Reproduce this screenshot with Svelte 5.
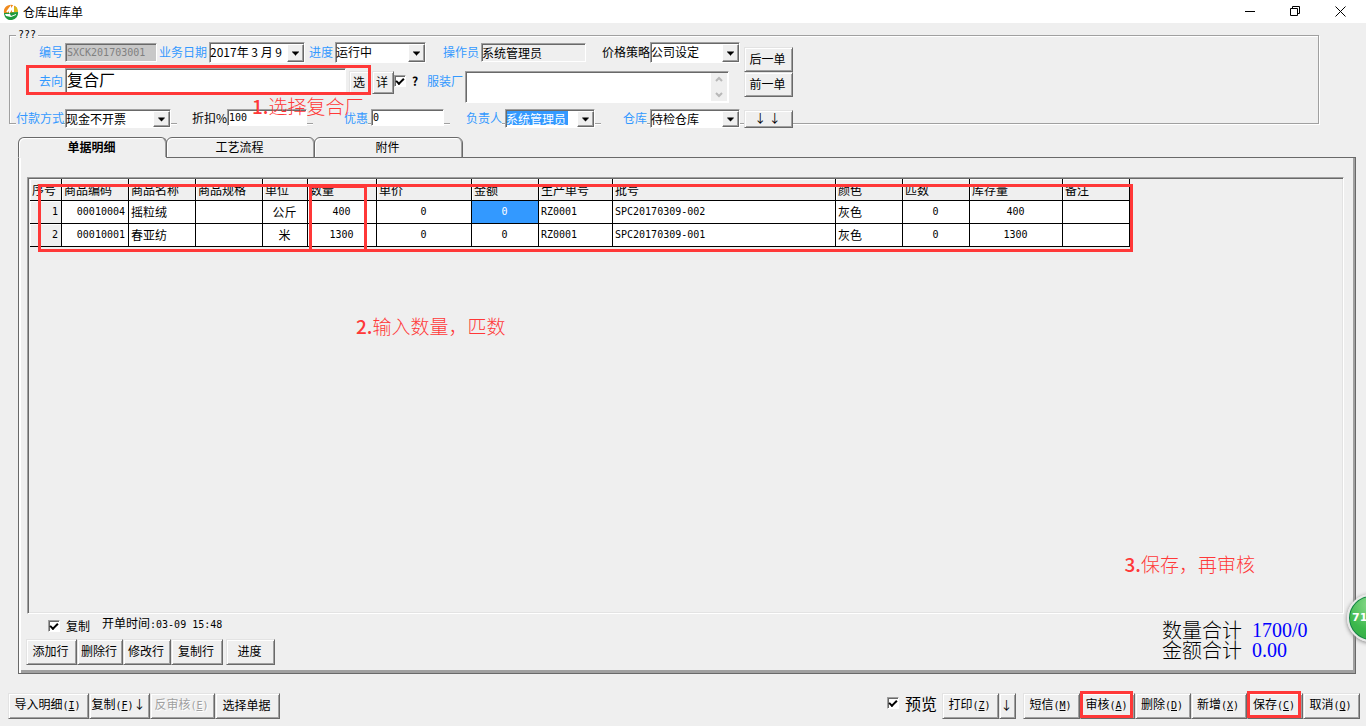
<script lang="ts">
  interface Column {
    title: string;
    width: number;
    align: 'left' | 'center' | 'right';
  }

  const columns: Column[] = [
    { title: '序号', width: 32, align: 'right' },
    { title: '商品编码', width: 67, align: 'right' },
    { title: '商品名称', width: 67, align: 'left' },
    { title: '商品规格', width: 67, align: 'left' },
    { title: '单位', width: 45, align: 'center' },
    { title: '数量', width: 69, align: 'center' },
    { title: '单价', width: 95, align: 'center' },
    { title: '金额', width: 67, align: 'center' },
    { title: '生产单号', width: 74, align: 'left' },
    { title: '批号', width: 223, align: 'left' },
    { title: '颜色', width: 67, align: 'left' },
    { title: '匹数', width: 67, align: 'center' },
    { title: '库存量', width: 93, align: 'center' },
    { title: '备注', width: 67, align: 'left' }
  ];

  const rows = [
    ['1', '00010004', '摇粒绒', '', '公斤', '400', '0', '0', 'RZ0001', 'SPC20170309-002', '灰色', '0', '400', ''],
    ['2', '00010001', '春亚纺', '', '米', '1300', '0', '0', 'RZ0001', 'SPC20170309-001', '灰色', '0', '1300', '']
  ];

  const tabs = ['单据明细', '工艺流程', '附件'];

  let activeTab = $state(0);
  let selected = $state({ row: 0, col: 7 });
  let detail = $state(true);
  let copy = $state(true);
  let preview = $state(true);

  const tableWidth = columns.reduce((sum, c) => sum + c.width, 0);
</script>

{#snippet key(letter: string)}<span class="ascii">(<u>{letter}</u>)</span>{/snippet}

{#snippet combo(id: string, value: string, picked: boolean)}
  <div class="combo" class:picked>
    <select {id}><option>{value}</option></select>
    <svg class="arrow" viewBox="0 0 15 15" aria-hidden="true"><path d="M4 6h7v1h-1v1h-1v1h-1v1h-1v-1h-1v-1h-1v-1h-1z" /></svg>
  </div>
{/snippet}

<div class="window">
  <header class="titlebar">
    <svg class="logo" viewBox="0 0 16 16" aria-hidden="true">
      <path d="M1 9a7 7 0 0 1 12-6l1 1-4 5-9 1z" fill="#f08a1d" />
      <path d="M12 2a7 7 0 0 1 3 6l-5 1V6z" fill="#d9b81c" />
      <path d="M1 9l14-1A7 7 0 0 1 1 10z" fill="#1f9a3c" />
      <path d="M2 10h5l1 2 5-2v1l-5 2-5-1z" fill="#fff" />
      <path d="M4 8l3-4v3l3-4v5" fill="none" stroke="#fff" stroke-width="2" />
    </svg>
    <span class="title">仓库出库单</span>
    <button class="sys" aria-label="最小化"><svg viewBox="0 0 11 11"><path d="M0 5.500h10" /></svg></button>
    <button class="sys" aria-label="还原"><svg viewBox="0 0 11 11"><path d="M.5 2.500h7v7h-7zM2.500 2.500v-2h7v7h-2" /></svg></button>
    <button class="sys" aria-label="关闭"><svg viewBox="0 0 11 11"><path d="M.5.5l10 10M10.500.5l-10 10" /></svg></button>
  </header>

  <fieldset>
    <legend class="ascii">???</legend>
    <div class="form">
      <div class="fields">
        <div class="row first">
          <label for="no">编号</label>
          <input id="no" class="ascii" value="SXCK201703001" disabled />
          <label for="date">业务日期</label>
          {@render combo('date', '2017年 3 月 9', false)}
          <label for="state">进度</label>
          {@render combo('state', '运行中', false)}
          <label for="operator">操作员</label>
          <input id="operator" class="flat" value="系统管理员" readonly />
          <label for="policy" class="plain">价格策略</label>
          {@render combo('policy', '公司设定', false)}
        </div>

        <div class="row second">
          <label for="target">去向</label>
          <input id="target" class="big" value="复合厂" />
          <button>选</button>
          <button>详</button>
          <input type="checkbox" aria-label="详" bind:checked={detail} />
          <b class="help">?</b>
          <label for="factory">服装厂</label>
          <div class="memo">
            <textarea id="factory"></textarea>
            <svg viewBox="0 0 16 28" aria-hidden="true"><path d="M5 8l3-3 3 3M5 20l3 3 3-3" /></svg>
          </div>
          <span class="mark"></span>
        </div>

        <div class="row third">
          <label for="pay">付款方式</label>
          {@render combo('pay', '现金不开票', false)}
          <label for="discount" class="plain">折扣%</label>
          <input id="discount" class="ascii" value="100" />
          <label for="off">优惠</label>
          <input id="off" class="ascii" value="0" />
          <label for="owner">负责人</label>
          {@render combo('owner', '系统管理员', true)}
          <label for="store">仓库</label>
          {@render combo('store', '待检仓库', false)}
        </div>
        <span class="note note-one"><b>1.</b>选择复合厂</span>
      </div>

      <div class="nav">
        <button>后一单</button>
        <button>前一单</button>
        <button class="down">↓ ↓</button>
      </div>
    </div>
  </fieldset>

  <div class="tabs" role="tablist">
    {#each tabs as tab, i}
      <button role="tab" class="tab" class:active={i === activeTab} aria-selected={i === activeTab} onclick={() => (activeTab = i)}>{tab}</button>
    {/each}
  </div>

  <main class="panel">
    <div class="grid-box">
      <table style="width: {tableWidth}px">
        <colgroup>
          {#each columns as column}
            <col style="width: {column.width}px" />
          {/each}
        </colgroup>
        <thead>
          <tr>
            {#each columns as column}
              <th>{column.title}</th>
            {/each}
          </tr>
        </thead>
        <tbody>
          {#each rows as row, r}
            <tr>
              {#each row as cell, c}
                <td
                  class={columns[c].align}
                  class:head={c === 0}
                  class:ascii={/^[\x20-\x7e]+$/.test(cell)}
                  class:selected={selected.row === r && selected.col === c}
                  onclick={() => (selected = { row: r, col: c })}
                >{cell}</td>
              {/each}
            </tr>
          {/each}
        </tbody>
      </table>
      <span class="mark mark-table"></span>
      <span class="mark mark-amount"></span>
      <span class="note note-two"><b>2.</b>输入数量，匹数</span>
      <span class="note note-three"><b>3.</b>保存，再审核</span>
    </div>

    <div class="summary">
      <div>
        <div class="status">
          <label class="check"><input type="checkbox" bind:checked={copy} />复制</label>
          <span>开单时间<span class="ascii">:03-09 15:48</span></span>
        </div>
        <div class="row-tools">
          <button>添加行</button>
          <button>删除行</button>
          <button>修改行</button>
          <button>复制行</button>
          <button class="apart">进度</button>
        </div>
      </div>
      <dl>
        <dt>数量合计</dt>
        <dd>1700/0</dd>
        <dt>金额合计</dt>
        <dd>0.00</dd>
      </dl>
    </div>
  </main>

  <footer>
    <div class="actions left-actions">
      <button>导入明细{@render key('I')}</button>
      <button>复制{@render key('F')}↓</button>
      <button disabled>反审核{@render key('E')}</button>
      <button>选择单据</button>
    </div>
    <label class="check preview"><input type="checkbox" bind:checked={preview} />预览</label>
    <div class="actions print-actions">
      <button>打印{@render key('Z')}</button>
      <button>↓</button>
    </div>
    <div class="actions right-actions">
      <button>短信{@render key('M')}</button>
      <button>审核{@render key('A')}<span class="mark"></span></button>
      <button>删除{@render key('D')}</button>
      <button>新增{@render key('X')}</button>
      <button>保存{@render key('C')}<span class="mark"></span></button>
      <button>取消{@render key('Q')}</button>
    </div>
  </footer>

  <div class="ball">71</div>
</div>

<style>
  :global(body) {
    background: #efefef;
  }

  .window {
    position: relative;
    display: flex;
    flex-direction: column;
    min-height: 100vh;
    overflow: hidden;
    background: #efefef;
    color: #000;
    font-family: "Noto Sans CJK SC", sans-serif;
    font-size: 12px;
    line-height: 14px;
    white-space: nowrap;
  }

  input,
  select,
  textarea,
  button,
  label,
  table,
  dl {
    box-sizing: border-box;
    margin: 0;
    font-family: inherit;
    font-size: inherit;
    line-height: 14px;
  }

  .window .ascii {
    font-family: "DejaVu Sans Mono", monospace;
    font-size: 10px;
  }

  /* Title bar */
  .titlebar {
    display: flex;
    align-items: center;
    height: 23px;
    padding: 0 3px;
    background: #fff;
  }

  .logo {
    width: 16px;
    height: 16px;
  }

  .title {
    flex: 1;
    padding-left: 4px;
  }

  .titlebar .sys {
    width: 45px;
    height: 20px;
    padding: 0;
    border: 0;
    box-shadow: none;
    background: none;
  }

  .sys svg {
    width: 11px;
    height: 11px;
    fill: none;
    stroke: #000;
  }

  /* Raised buttons */
  button {
    position: relative;
    padding: 0 2px 2px 0;
    border: 1px solid;
    border-color: #e3e3e3 #696969 #696969 #e3e3e3;
    background: #efefef;
    box-shadow: inset 1px 1px #fff, inset -1px -1px #a0a0a0;
    color: #000;
  }

  button:disabled {
    color: #a0a0a0;
    text-shadow: 1px 1px #fff;
  }

  /* Sunken inputs */
  input,
  textarea,
  .combo {
    border: 1px solid;
    border-color: #a0a0a0 #fff #fff #a0a0a0;
    border-radius: 0;
    outline: 0;
    background: #fff;
    box-shadow: inset 1px 1px #696969;
    color: #000;
  }

  input {
    min-width: 0;
    padding: 0 1px;
  }

  input:disabled {
    background: #c8c8c8;
    color: #808080;
  }

  input.flat {
    padding: 0;
    background: #efefef;
  }

  input.big {
    padding-bottom: 3px;
    font-size: 16px;
  }

  input[type="checkbox"] {
    appearance: none;
    display: grid;
    place-items: center;
    width: 12px;
    height: 12px;
    padding: 0;
  }

  input[type="checkbox"]:checked::after {
    content: '';
    width: 6px;
    height: 3px;
    border: solid #000;
    border-width: 0 0 2px 2px;
    transform: translateY(-1px) rotate(-45deg);
  }

  .combo {
    position: relative;
    height: 19px;
  }

  .combo select {
    appearance: none;
    display: block;
    width: 100%;
    height: 100%;
    padding: 0 18px 0 0;
    border: 0;
    border-radius: 0;
    outline: 0;
    background: transparent;
    color: #000;
  }

  .combo.picked select {
    background: linear-gradient(#3399ff, #3399ff) 1px 1px / 61px 14px no-repeat;
    color: #fff;
  }

  .combo .arrow {
    position: absolute;
    top: 1px;
    right: 0;
    width: 15px;
    height: calc(100% - 3px);
    border: 1px solid;
    border-color: #fff #696969 #696969 #fff;
    background: #efefef;
    box-shadow: inset -1px -1px #a0a0a0;
    pointer-events: none;
  }

  /* Header form */
  fieldset {
    min-width: 0;
    margin: 6px 47px 0 9px;
    padding: 0;
    border: 1px solid #a0a0a0;
    box-shadow: 1px 1px #fff, inset 1px 1px #fff;
  }

  legend {
    height: 12px;
    margin-left: 6px;
    padding: 0 2px;
    background: #efefef;
    line-height: 12px;
  }

  .form {
    display: flex;
    margin-bottom: -3px;
  }

  .fields {
    position: relative;
    display: flex;
    flex-direction: column;
    gap: 5px;
  }

  .row {
    position: relative;
    display: grid;
  }

  .row label {
    padding-right: 2px;
    color: #3399ff;
    text-align: right;
  }

  .row label.plain {
    padding-right: 0;
    color: #000;
  }

  .first {
    grid-template-columns: 55px 92px 52px 96px 30px 91px 55px 105px 64px 90px;
    align-items: center;
    height: 22px;
  }

  .first input {
    height: 19px;
  }

  .second {
    grid-template-columns: 55px 284px 23px 22px 13px 16px 42px 264px;
    height: 36px;
  }

  .second label,
  .second .help {
    line-height: 26px;
  }

  .second .help {
    text-align: center;
  }

  .second .big {
    width: 281px;
    height: 25px;
  }

  .second button {
    width: 22px;
    height: 23px;
    margin-top: 3px;
  }

  .second input[type="checkbox"] {
    margin-top: 7px;
  }

  .memo {
    position: relative;
    margin-top: 3px;
  }

  .memo textarea {
    display: block;
    width: 100%;
    height: 32px;
    resize: none;
  }

  .memo svg {
    position: absolute;
    top: 2px;
    right: 2px;
    width: 16px;
    height: 28px;
    background: #efefef;
    fill: none;
    stroke: #b8b8b8;
    stroke-width: 2;
  }

  .third {
    grid-template-columns: 55px 106px 56px 80px 64px 73px 61px 90px 55px 90px;
    height: 17px;
  }

  .third label {
    margin: 0 3px 0 6px;
    padding: 0;
    background: #efefef;
    line-height: 17px;
  }

  .third .plain {
    margin-right: 0;
  }

  .third .combo,
  .third input {
    height: 17px;
  }

  .nav {
    display: grid;
    grid-template-rows: 25px 25px 18px;
    width: 49px;
    padding: 6px 0 0 4px;
  }

  .nav .down {
    margin-top: 13px;
    height: 18px;
  }

  /* Tabs */
  .tabs {
    position: relative;
    z-index: 1;
    display: flex;
    height: 21px;
    margin: 13px 18px -1px;
  }

  .tab {
    width: 149px;
    margin-right: -1px;
    border-color: #696969;
    border-radius: 6px 6px 0 0;
    box-shadow: inset 1px 1px #fff, inset -1px 0 #a0a0a0;
  }

  .tab.active {
    border-bottom-color: #efefef;
    font-weight: 700;
  }

  .panel {
    flex: 1;
    display: flex;
    flex-direction: column;
    margin: 0 10px 0 18px;
    padding: 19px 11px 3px 8px;
    border: 1px solid #696969;
    box-shadow: inset 2px 0 #fff, inset -2px -3px #a0a0a0;
  }

  /* Detail table */
  .grid-box {
    position: relative;
    flex: 1;
    border: 1px solid;
    border-color: #a0a0a0 #fff #fff #a0a0a0;
    box-shadow: inset 1px 1px #696969, inset -1px -1px #e3e3e3;
    padding: 1px 0 0 2px;
  }

  table {
    table-layout: fixed;
    border-spacing: 0;
  }

  th,
  td {
    box-sizing: border-box;
    height: 23px;
    padding: 0 3px 0 2px;
    border: solid #000;
    border-width: 0 1px 1px 0;
    background: #fff;
    font-weight: 400;
  }

  th {
    height: 22px;
    background: #efefef;
    box-shadow: inset 1px 1px #fff;
    text-align: left;
  }

  td.head {
    background: #efefef;
    box-shadow: inset 1px 1px #fff;
  }

  .left {
    text-align: left;
  }

  .center {
    text-align: center;
  }

  .right {
    text-align: right;
  }

  td.selected {
    background: #3399ff;
    color: #fff;
  }

  /* Summary under the table */
  .summary {
    display: flex;
    justify-content: space-between;
    height: 56px;
  }

  .check {
    display: flex;
    align-items: center;
    gap: 6px;
  }

  .status {
    display: flex;
    gap: 12px;
    height: 20px;
    padding: 2px 0 3px 21px;
  }

  .row-tools {
    display: grid;
    grid-template-columns: 51px 46px 48px 52px 52px;
    height: 26px;
    margin-left: -1px;
  }

  .row-tools .apart {
    margin-left: 3px;
  }

  dl {
    display: grid;
    grid-template-columns: 90px 92px;
    align-content: start;
    padding-top: 6px;
  }

  dt,
  dd {
    margin: 0;
    line-height: 20px;
    font-size: 20px;
    font-weight: 300;
  }

  dd {
    color: #0000ff;
    font-family: "Liberation Serif", serif;
  }

  /* Bottom bar */
  footer {
    display: flex;
    padding: 19px 6px 7px 8px;
  }

  .actions {
    display: grid;
    height: 26px;
  }

  .left-actions {
    grid-template-columns: 81px 61px 65px 65px;
    margin-right: auto;
  }

  .preview {
    height: 20px;
    padding-right: 5px;
    font-size: 16px;
  }

  .print-actions {
    grid-template-columns: 57px 17px;
    margin-right: 7px;
  }

  .right-actions {
    grid-template-columns: 57px 55px 56px 56px 56px 57px;
  }

  /* Annotations */
  .mark {
    position: absolute;
    z-index: 2;
    box-sizing: border-box;
    border: 3px solid #ff3838;
    pointer-events: none;
  }

  .second .mark {
    top: -3px;
    left: 16px;
    width: 345px;
    height: 30px;
  }

  .actions .mark {
    inset: -3px 1px 0 -1px;
  }

  .mark-table {
    top: 6px;
    left: 10px;
    width: 1095px;
    height: 68px;
  }

  .mark-amount {
    top: 7px;
    left: 281px;
    width: 58px;
    height: 67px;
  }

  .note {
    position: absolute;
    z-index: 2;
    color: #ff3838;
    font-size: 19px;
    font-weight: 300;
    line-height: 20px;
    pointer-events: none;
  }

  .note b {
    font-weight: 500;
  }

  .note-one {
    top: 55px;
    left: 242px;
  }

  .note-two {
    top: 138px;
    left: 328px;
  }

  .note-three {
    right: 88px;
    bottom: 39px;
  }

  .ball {
    position: absolute;
    right: -29px;
    bottom: 84px;
    box-sizing: border-box;
    width: 48px;
    height: 48px;
    padding-left: 3px;
    border: 2px solid #e8e8e8;
    border-radius: 50%;
    background: radial-gradient(circle at 50% 20%, #8fdc8f, #3cb84c 60%, #35a845);
    box-shadow: 0 1px 4px #808080, inset 0 0 0 1px #14804a;
    color: #fff;
    font-family: "DejaVu Sans", sans-serif;
    font-size: 11px;
    font-weight: 700;
    line-height: 44px;
  }
</style>
